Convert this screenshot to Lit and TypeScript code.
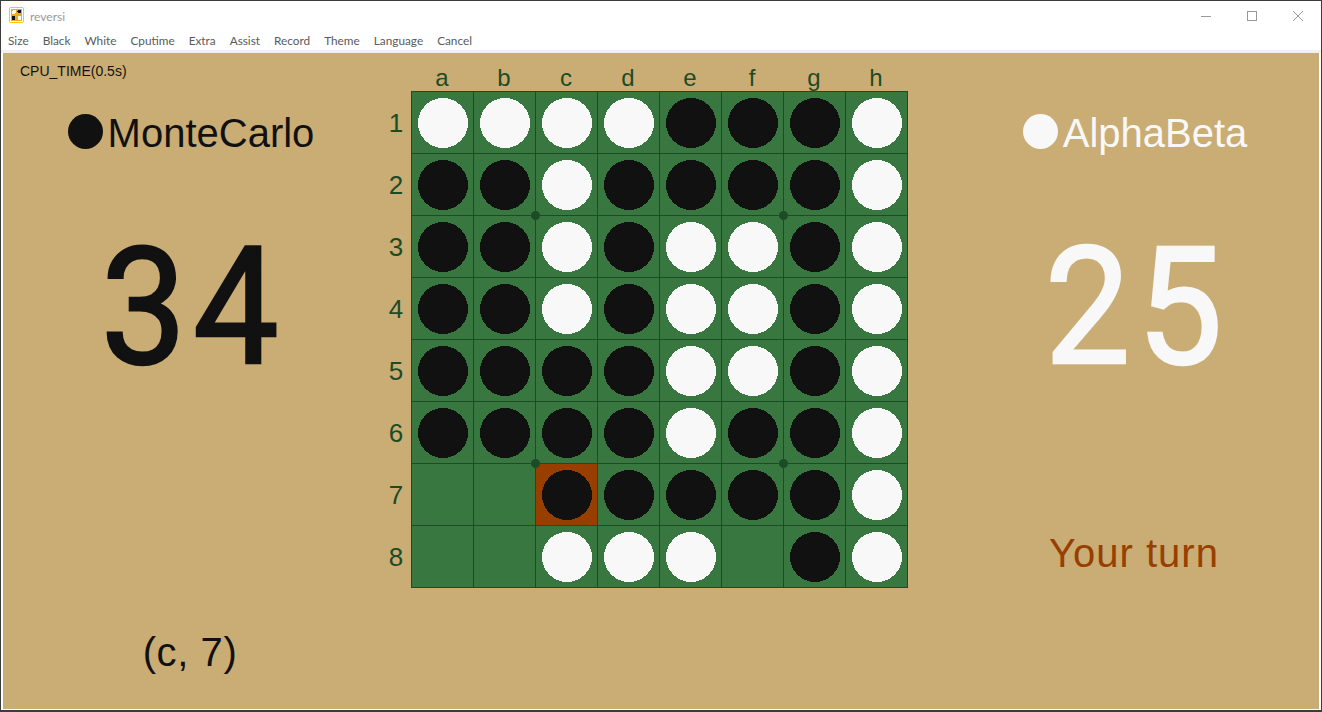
import { LitElement, html, css, svg } from 'lit';
import { customElement } from 'lit/decorators.js';

const MENU = ['Size', 'Black', 'White', 'Cputime', 'Extra', 'Assist', 'Record', 'Theme', 'Language', 'Cancel'];
const COLS = ['a', 'b', 'c', 'd', 'e', 'f', 'g', 'h'];
const ROWS = ['1', '2', '3', '4', '5', '6', '7', '8'];

// b black, w white, . empty
const BOARD = [
  'wwwwbbbw',
  'bbwbbbbw',
  'bbwbwwbw',
  'bbwbwwbw',
  'bbbbwwbw',
  'bbbbwbbw',
  '..bbbbbw',
  '..www.bw',
];

@customElement('app-root')
export class AppRoot extends LitElement {
  static styles = css`
    :host {
      display: block;
      width: 1322px;
      height: 712px;
      overflow: hidden;
      background: #fff;
      font-family: 'Liberation Sans', Arial, sans-serif;
    }
    .window {
      box-sizing: border-box;
      height: 712px;
      display: flex;
      flex-direction: column;
      border: 1px solid #3c3c3c;
      border-bottom-width: 2px;
    }
    .titlebar {
      height: 30px;
      display: flex;
      align-items: center;
      padding-left: 8px;
      font: 12px Lato, sans-serif;
      color: #999;
    }
    .app-icon {
      width: 15px;
      height: 16px;
      margin: 0 6px 2px 0;
    }
    .title {
      flex: 1;
    }
    .win-btn {
      width: 46px;
      height: 30px;
      display: flex;
      align-items: center;
      justify-content: center;
    }
    .win-btn svg {
      display: block;
    }
    .menu {
      height: 19px;
      display: flex;
      gap: 14px;
      padding-left: 7px;
      font: 11.8px/20px Lato, sans-serif;
      color: #5a5a5a;
      align-items: center;
    }
    .strip {
      height: 3px;
      background: #f0f0f0;
    }
    .canvas {
      flex: 1;
      margin: 0 2px 1px 2px;
      background: #c9ad74;
      display: grid;
      grid-template-columns: 374px 34px 497px 41px 370px;
    }
    .panel {
      display: flex;
      flex-direction: column;
      align-items: center;
      position: relative;
    }
    .cpu {
      position: absolute;
      left: 17px;
      top: 9px;
      font-size: 14px;
      line-height: 18px;
      color: #111;
    }
    .name {
      margin-top: 55px;
      padding-left: 2px;
      height: 50px;
      display: flex;
      align-items: center;
      gap: 5px;
      font-size: 40px;
      line-height: 50px;
    }
    .name svg {
      width: 35px;
      height: 35px;
      margin-top: -3px;
    }
    .score {
      margin-top: 49px;
      padding-left: 7px;
      height: 200px;
      font-family: Roboto, 'Liberation Sans', sans-serif;
      font-size: 164px;
      line-height: 200px;
      letter-spacing: 7px;
      -webkit-text-stroke: 2.5px currentColor;
      transform: scaleX(0.93);
    }
    .black {
      color: #111;
    }
    .white {
      color: #f8f8f8;
    }
    .move {
      margin-top: 220px;
      font-size: 40px;
      line-height: 50px;
      letter-spacing: 0.6px;
      color: #111;
    }
    .turn {
      margin-top: 121px;
      font-size: 40px;
      line-height: 50px;
      letter-spacing: 1px;
      color: #983f00;
    }
    .rank-labels {
      padding-top: 38px;
      display: grid;
      grid-template-rows: repeat(8, 62px);
    }
    .label {
      display: flex;
      align-items: center;
      justify-content: center;
      color: #1c4b27;
      font-size: 24px;
    }
    .rank-labels .label {
      padding: 2px 0 0 4px;
      font-size: 26px;
    }
    .file-labels {
      height: 38px;
      display: grid;
      grid-template-columns: repeat(8, 62px);
    }
    .file-labels .label {
      padding-top: 12px;
      box-sizing: border-box;
      height: 38px;
    }
    .board {
      position: relative;
      box-sizing: border-box;
      width: 497px;
      height: 497px;
      display: grid;
      grid-template-columns: repeat(8, 62px);
      grid-template-rows: repeat(8, 62px);
      border-right: 1px solid #1c4b27;
      border-bottom: 1px solid #1c4b27;
    }
    .cell {
      box-sizing: border-box;
      padding: 6px 0 0 6px;
      background: #387840;
      border-left: 1px solid #1c4b27;
      border-top: 1px solid #1c4b27;
    }
    .cell.last {
      background: #983f00;
    }
    .disc {
      display: block;
      width: 50px;
      height: 50px;
    }
    .star {
      position: absolute;
      width: 9px;
      height: 9px;
      margin: -4px 0 0 -4px;
      border-radius: 50%;
      background: #1c4b27;
    }
  `;

  private disc(c: string) {
    if (c === '.') return null;
    const fill = c === 'b' ? '#111111' : '#f8f8f8';
    return html`<svg class="disc" viewBox="0 0 50 50" shape-rendering="crispEdges">
      ${svg`<circle cx="25" cy="25" r="25" fill=${fill}></circle>`}
    </svg>`;
  }

  private titlebar() {
    return html`<div class="titlebar">
      <svg class="app-icon" viewBox="0 0 15 16" shape-rendering="crispEdges">
        <path d="M1 0.5H14M1 15.5H14M0.5 1V15M14.5 1V15" stroke="#ffc21a"></path>
        <rect x="2" y="2" width="11" height="12" fill="#f5a623"></rect>
        <circle cx="5" cy="5" r="2" fill="#fff"></circle>
        <circle cx="10.5" cy="4.5" r="2" fill="#111"></circle>
        <circle cx="4.5" cy="11" r="2" fill="#111"></circle>
        <circle cx="10.5" cy="11" r="2" fill="#fff"></circle>
      </svg>
      <span class="title">reversi</span>
      <div class="win-btn">
        <svg width="10" height="10"><path d="M0 5.5H10" stroke="#999"></path></svg>
      </div>
      <div class="win-btn">
        <svg width="10" height="10"><rect x="0.5" y="0.5" width="9" height="9" fill="none" stroke="#999"></rect></svg>
      </div>
      <div class="win-btn">
        <svg width="10" height="10"><path d="M0 0L10 10M10 0L0 10" stroke="#999"></path></svg>
      </div>
    </div>`;
  }

  private name(label: string, cls: string) {
    const fill = cls === 'black' ? '#111' : '#f8f8f8';
    return html`<div class="name ${cls}">
      <svg viewBox="0 0 36 36"><circle cx="18" cy="18" r="18" fill=${fill}></circle></svg>
      <span>${label}</span>
    </div>`;
  }

  render() {
    return html`<div class="window">
      ${this.titlebar()}
      <div class="menu">${MENU.map((m) => html`<span>${m}</span>`)}</div>
      <div class="strip"></div>
      <div class="canvas">
        <div class="panel">
          <div class="cpu">CPU_TIME(0.5s)</div>
          ${this.name('MonteCarlo', 'black')}
          <div class="score black">34</div>
          <div class="move">(c, 7)</div>
        </div>
        <div class="rank-labels">
          ${ROWS.map((r) => html`<div class="label">${r}</div>`)}
        </div>
        <div>
          <div class="file-labels">
            ${COLS.map((c) => html`<div class="label">${c}</div>`)}
          </div>
          <div class="board">
            ${BOARD.map((row, y) =>
              [...row].map(
                (c, x) =>
                  html`<div class="cell ${x === 2 && y === 6 ? 'last' : ''}">${this.disc(c)}</div>`
              )
            )}
            ${[
              [124, 124],
              [372, 124],
              [124, 372],
              [372, 372],
            ].map(
              ([x, y]) => html`<div class="star" style="left:${x}px;top:${y}px"></div>`
            )}
          </div>
        </div>
        <div></div>
        <div class="panel">
          ${this.name('AlphaBeta', 'white')}
          <div class="score white">25</div>
          <div class="turn">Your turn</div>
        </div>
      </div>
    </div>`;
  }
}
